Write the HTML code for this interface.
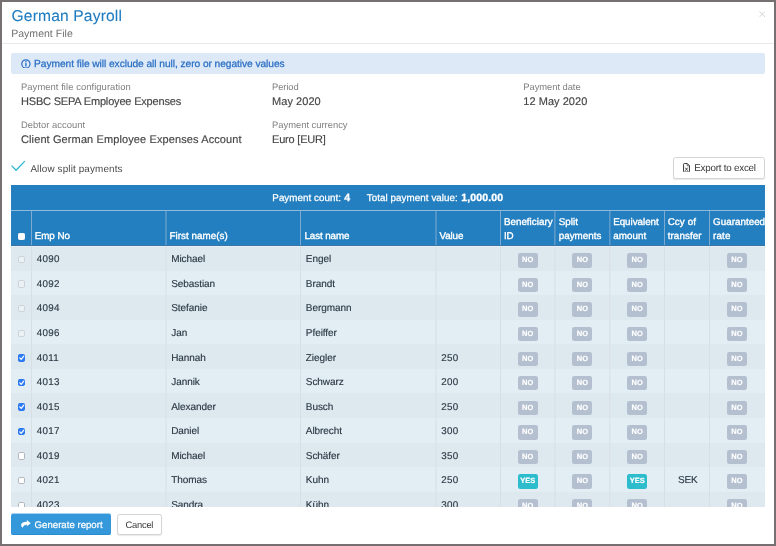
<!DOCTYPE html>
<html lang="en"><head><meta charset="utf-8"><title>German Payroll - Payment File</title>
<style>
*{box-sizing:border-box;margin:0;padding:0}
html,body{width:776px;height:546px;overflow:hidden;background:#fff}
body{font-family:"Liberation Sans",Arial,sans-serif;position:relative}
.t{position:absolute;white-space:nowrap;line-height:1;text-rendering:geometricPrecision;font-family:"Liberation Sans",Arial,sans-serif}
.abs{position:absolute}
#frame{left:0;top:0;width:776px;height:546px;border:2px solid #767070;z-index:10}
#hr{left:2px;top:43px;width:772px;height:1px;background:#e9e9e9}
#alert{left:11px;top:53.4px;width:754px;height:20.6px;background:#dde9f7;border-radius:2px}
#export{left:673px;top:156.6px;width:91.8px;height:22px;border:1px solid #d4d4d4;border-radius:2.5px;background:#fff;box-shadow:0 1px 1px rgba(0,0,0,.09)}
#clip{left:0;top:0;width:764.6px;height:506.6px;overflow:hidden}
#blue{left:11.4px;top:185px;width:753.2px;height:60.5px;background:#237fc0}
#hline{left:11.4px;top:209.6px;width:753.5px;height:1px;background:#8dbce0}
.hvl{position:absolute;top:210.6px;width:1px;height:34.9px;background:#7eaad0}
.row{position:absolute;left:11.4px;width:753.2px}
.vl{position:absolute;top:245.5px;width:1px;height:262px;background:#d7dfe4}
.bd{position:absolute;width:19.8px;height:14.3px;border-radius:2.3px;font-size:7.5px;font-weight:bold;color:#fff;text-align:center;line-height:14.3px;letter-spacing:0;-webkit-text-stroke:.15px #fff;text-rendering:geometricPrecision;font-family:"Liberation Sans",Arial,sans-serif}
.cb{position:absolute;width:7.6px;height:7.4px;border:1px solid #aaa;border-radius:1.8px;background:#fff}
.cb svg{position:absolute;left:-1px;top:-1px;width:7.4px;height:7.4px}
#gen{left:11px;top:513.6px;width:100px;height:21.4px;background:#3498db;border-radius:2px;border-bottom:1px solid #2a8bd0}
#cancel{left:117.4px;top:513.6px;width:44.3px;height:21.6px;background:#fff;border:1px solid #d4d4d4;border-radius:2.5px;box-shadow:0 1px 1px rgba(0,0,0,.09)}
#page{left:0;top:0;width:776px;height:546px;will-change:transform;background:#fff;overflow:hidden}
</style></head><body>
<div id="page" class="abs">
<div id="hr" class="abs"></div>
<div id="alert" class="abs"></div>
<svg class="abs" style="left:21.3px;top:58.7px" width="9.8" height="9.8" viewBox="0 0 10 10"><circle cx="5" cy="5" r="4.2" fill="none" stroke="#2a6fc4" stroke-width="1.25"/><rect x="4.3" y="4.2" width="1.4" height="3.4" fill="#2a6fc4"/><rect x="4.3" y="2.2" width="1.4" height="1.3" fill="#2a6fc4"/></svg>
<svg class="abs" style="left:10px;top:159px" width="16" height="14" viewBox="0 0 16 14"><path d="M1.6 6.6 L6.05 11.3 L14.8 2.1" fill="none" stroke="#2ab6cf" stroke-width="1.25"/></svg>
<div id="export" class="abs"><svg width="7" height="9.6" viewBox="0 0 7 9.6" style="position:absolute;left:9.3px;top:5.3px"><path d="M1.3 0.55 H4.3 L6.45 2.7 V8.3 Q6.45 9.05 5.7 9.05 H1.3 Q0.55 9.05 0.55 8.3 V1.3 Q0.55 0.55 1.3 0.55 Z" fill="none" stroke="#3a3a3a" stroke-width="1"/><path d="M4.2 0.6 V2.8 H6.4" fill="none" stroke="#3a3a3a" stroke-width=".7"/><path d="M2.3 4.7 L4.7 7.7 M4.7 4.7 L2.3 7.7" stroke="#3a3a3a" stroke-width=".95"/></svg></div>
<svg class="abs" style="left:758.8px;top:11px" width="6.4" height="6.4" viewBox="0 0 6 6"><path d="M0.3 0.3 L5.7 5.7 M5.7 0.3 L0.3 5.7" stroke="#cfcfcf" stroke-width=".8"/></svg>
<div id="clip" class="abs">
<div id="blue" class="abs"></div>
<div id="hline" class="abs"></div>
<div class="hvl" style="left:31px"></div>
<div class="hvl" style="left:165px;opacity:0.50"></div><div class="hvl" style="left:166px;opacity:0.50"></div>
<div class="hvl" style="left:300px"></div>
<div class="hvl" style="left:435px;opacity:0.50"></div><div class="hvl" style="left:436px;opacity:0.50"></div>
<div class="hvl" style="left:500px"></div>
<div class="hvl" style="left:554px;opacity:0.60"></div><div class="hvl" style="left:555px;opacity:0.40"></div>
<div class="hvl" style="left:609px;opacity:0.65"></div><div class="hvl" style="left:610px;opacity:0.35"></div>
<div class="hvl" style="left:664px"></div>
<div class="hvl" style="left:709px"></div>
<span class="cb" style="left:17.8px;top:232.6px;width:7.7px;height:7.3px;border-color:#f7f9fb;background:#fff;border-radius:1.3px"></span>
<div class="row" style="top:245.4px;height:3px;background:#dee8ef"></div>
<div class="row" style="top:246.00px;height:24.87px;background:#dee8ef"></div>
<div class="row" style="top:270.57px;height:24.87px;background:#e3edf4"></div>
<div class="row" style="top:295.14px;height:24.87px;background:#dee8ef"></div>
<div class="row" style="top:319.71px;height:24.87px;background:#e3edf4"></div>
<div class="row" style="top:344.28px;height:24.87px;background:#dee8ef"></div>
<div class="row" style="top:368.85px;height:24.87px;background:#e3edf4"></div>
<div class="row" style="top:393.42px;height:24.87px;background:#dee8ef"></div>
<div class="row" style="top:417.99px;height:24.87px;background:#e3edf4"></div>
<div class="row" style="top:442.56px;height:24.87px;background:#dee8ef"></div>
<div class="row" style="top:467.13px;height:24.87px;background:#e3edf4"></div>
<div class="row" style="top:491.70px;height:24.87px;background:#dee8ef"></div>
<div class="vl" style="left:31px"></div>
<div class="vl" style="left:165px;opacity:0.50"></div><div class="vl" style="left:166px;opacity:0.50"></div>
<div class="vl" style="left:300px"></div>
<div class="vl" style="left:435px;opacity:0.50"></div><div class="vl" style="left:436px;opacity:0.50"></div>
<div class="vl" style="left:500px"></div>
<div class="vl" style="left:554px;opacity:0.60"></div><div class="vl" style="left:555px;opacity:0.40"></div>
<div class="vl" style="left:609px;opacity:0.65"></div><div class="vl" style="left:610px;opacity:0.35"></div>
<div class="vl" style="left:664px"></div>
<div class="vl" style="left:709px"></div>
<span class="cb" style="left:17.7px;top:255.89px;border-color:#cdd4d9;background:#ecf1f5"></span>
<span class="bd" style="left:517.80px;top:253.24px;background:#b4c0d0">NO</span>
<span class="bd" style="left:572.48px;top:253.24px;background:#b4c0d0">NO</span>
<span class="bd" style="left:627.27px;top:253.24px;background:#b4c0d0">NO</span>
<span class="bd" style="left:727.10px;top:253.24px;background:#b4c0d0">NO</span>
<span class="cb" style="left:17.7px;top:280.46px;border-color:#cdd4d9;background:#ecf1f5"></span>
<span class="bd" style="left:517.80px;top:277.81px;background:#b4c0d0">NO</span>
<span class="bd" style="left:572.48px;top:277.81px;background:#b4c0d0">NO</span>
<span class="bd" style="left:627.27px;top:277.81px;background:#b4c0d0">NO</span>
<span class="bd" style="left:727.10px;top:277.81px;background:#b4c0d0">NO</span>
<span class="cb" style="left:17.7px;top:305.03px;border-color:#cdd4d9;background:#ecf1f5"></span>
<span class="bd" style="left:517.80px;top:302.38px;background:#b4c0d0">NO</span>
<span class="bd" style="left:572.48px;top:302.38px;background:#b4c0d0">NO</span>
<span class="bd" style="left:627.27px;top:302.38px;background:#b4c0d0">NO</span>
<span class="bd" style="left:727.10px;top:302.38px;background:#b4c0d0">NO</span>
<span class="cb" style="left:17.7px;top:329.60px;border-color:#cdd4d9;background:#ecf1f5"></span>
<span class="bd" style="left:517.80px;top:326.95px;background:#b4c0d0">NO</span>
<span class="bd" style="left:572.48px;top:326.95px;background:#b4c0d0">NO</span>
<span class="bd" style="left:627.27px;top:326.95px;background:#b4c0d0">NO</span>
<span class="bd" style="left:727.10px;top:326.95px;background:#b4c0d0">NO</span>
<span class="cb" style="left:17.7px;top:354.17px;border-color:#2b77ee;background:#2e7cf6"><svg viewBox="0 0 10 10"><path d="M2.4 5.3 L4.3 7.2 L7.8 2.9" fill="none" stroke="#fff" stroke-width="1.7" stroke-linecap="round" stroke-linejoin="round"/></svg></span>
<span class="bd" style="left:517.80px;top:351.52px;background:#b4c0d0">NO</span>
<span class="bd" style="left:572.48px;top:351.52px;background:#b4c0d0">NO</span>
<span class="bd" style="left:627.27px;top:351.52px;background:#b4c0d0">NO</span>
<span class="bd" style="left:727.10px;top:351.52px;background:#b4c0d0">NO</span>
<span class="cb" style="left:17.7px;top:378.74px;border-color:#2b77ee;background:#2e7cf6"><svg viewBox="0 0 10 10"><path d="M2.4 5.3 L4.3 7.2 L7.8 2.9" fill="none" stroke="#fff" stroke-width="1.7" stroke-linecap="round" stroke-linejoin="round"/></svg></span>
<span class="bd" style="left:517.80px;top:376.09px;background:#b4c0d0">NO</span>
<span class="bd" style="left:572.48px;top:376.09px;background:#b4c0d0">NO</span>
<span class="bd" style="left:627.27px;top:376.09px;background:#b4c0d0">NO</span>
<span class="bd" style="left:727.10px;top:376.09px;background:#b4c0d0">NO</span>
<span class="cb" style="left:17.7px;top:403.31px;border-color:#2b77ee;background:#2e7cf6"><svg viewBox="0 0 10 10"><path d="M2.4 5.3 L4.3 7.2 L7.8 2.9" fill="none" stroke="#fff" stroke-width="1.7" stroke-linecap="round" stroke-linejoin="round"/></svg></span>
<span class="bd" style="left:517.80px;top:400.66px;background:#b4c0d0">NO</span>
<span class="bd" style="left:572.48px;top:400.66px;background:#b4c0d0">NO</span>
<span class="bd" style="left:627.27px;top:400.66px;background:#b4c0d0">NO</span>
<span class="bd" style="left:727.10px;top:400.66px;background:#b4c0d0">NO</span>
<span class="cb" style="left:17.7px;top:427.88px;border-color:#2b77ee;background:#2e7cf6"><svg viewBox="0 0 10 10"><path d="M2.4 5.3 L4.3 7.2 L7.8 2.9" fill="none" stroke="#fff" stroke-width="1.7" stroke-linecap="round" stroke-linejoin="round"/></svg></span>
<span class="bd" style="left:517.80px;top:425.23px;background:#b4c0d0">NO</span>
<span class="bd" style="left:572.48px;top:425.23px;background:#b4c0d0">NO</span>
<span class="bd" style="left:627.27px;top:425.23px;background:#b4c0d0">NO</span>
<span class="bd" style="left:727.10px;top:425.23px;background:#b4c0d0">NO</span>
<span class="cb" style="left:17.7px;top:452.45px;border-color:#b4b7bb;background:#fff"></span>
<span class="bd" style="left:517.80px;top:449.80px;background:#b4c0d0">NO</span>
<span class="bd" style="left:572.48px;top:449.80px;background:#b4c0d0">NO</span>
<span class="bd" style="left:627.27px;top:449.80px;background:#b4c0d0">NO</span>
<span class="bd" style="left:727.10px;top:449.80px;background:#b4c0d0">NO</span>
<span class="cb" style="left:17.7px;top:477.01px;border-color:#b4b7bb;background:#fff"></span>
<span class="bd" style="left:517.80px;top:474.37px;background:#2cbccc">YES</span>
<span class="bd" style="left:572.48px;top:474.37px;background:#b4c0d0">NO</span>
<span class="bd" style="left:627.27px;top:474.37px;background:#2cbccc">YES</span>
<span class="bd" style="left:727.10px;top:474.37px;background:#b4c0d0">NO</span>
<span class="cb" style="left:17.7px;top:501.59px;border-color:#b4b7bb;background:#fff"></span>
<span class="bd" style="left:517.80px;top:498.94px;background:#b4c0d0">NO</span>
<span class="bd" style="left:572.48px;top:498.94px;background:#b4c0d0">NO</span>
<span class="bd" style="left:627.27px;top:498.94px;background:#b4c0d0">NO</span>
<span class="bd" style="left:727.10px;top:498.94px;background:#b4c0d0">NO</span>
<div class="abs" style="left:11.4px;top:244.9px;width:753.2px;height:1px;background:#3d76a6"></div>
<div class="abs" style="left:11.4px;top:245.9px;width:753.2px;height:1.2px;background:#e8eff4"></div>
</div>
<div class="abs" style="left:0;top:506.6px;width:776px;height:40px;background:#fff"></div>
<div class="abs" style="left:11px;top:513px;width:100px;height:2px;background:#3498db;opacity:.45;border-radius:2px 2px 0 0"></div><div id="gen" class="abs"><svg width="9.8" height="7.9" viewBox="0 0 10 8" style="position:absolute;left:10.2px;top:6.7px"><path d="M6 0 L10 3.2 L6 6.4 V4.7 C3.8 4.7 2.3 5.6 1.7 8 C0.6 7.2 0.1 6.2 0.1 5.2 C0.1 2.9 2.8 1.7 6 1.7 Z" fill="#fff"/></svg></div>
<div id="cancel" class="abs"></div>
<div id="txt" class="abs" style="left:0;top:0;width:764.6px;height:506.6px;overflow:hidden">
<span class="t" id="t0" style="left:11.50px;top:9.30px;font-size:15.6px;color:#1f7cc0;letter-spacing:0.162px;-webkit-text-stroke:.1px #1f7cc0;">German Payroll</span>
<span class="t" id="t1" style="left:11.20px;top:28.90px;font-size:10.5px;color:#707070;letter-spacing:0.027px;">Payment File</span>
<span class="t" id="t2" style="left:34.10px;top:60.20px;font-size:10.2px;color:#2a6fc4;letter-spacing:-0.054px;-webkit-text-stroke:.25px #2a6fc4;">Payment file will exclude all null, zero or negative values</span>
<span class="t" id="t3" style="left:21.00px;top:82.20px;font-size:9.4px;color:#808080;letter-spacing:0.074px;">Payment file configuration</span>
<span class="t" id="t4" style="left:21.00px;top:96.90px;font-size:11px;color:#454545;letter-spacing:-0.181px;-webkit-text-stroke:.15px #454545;">HSBC SEPA Employee Expenses</span>
<span class="t" id="t5" style="left:272.10px;top:82.20px;font-size:9.4px;color:#808080;letter-spacing:-0.102px;">Period</span>
<span class="t" id="t6" style="left:272.10px;top:96.90px;font-size:11px;color:#454545;letter-spacing:0.036px;-webkit-text-stroke:.15px #454545;">May 2020</span>
<span class="t" id="t7" style="left:523.30px;top:82.20px;font-size:9.4px;color:#808080;letter-spacing:-0.047px;">Payment date</span>
<span class="t" id="t8" style="left:523.30px;top:96.90px;font-size:11px;color:#454545;letter-spacing:0.036px;-webkit-text-stroke:.15px #454545;">12 May 2020</span>
<span class="t" id="t9" style="left:21.00px;top:120.40px;font-size:9.4px;color:#808080;letter-spacing:0.043px;">Debtor account</span>
<span class="t" id="t10" style="left:21.00px;top:135.30px;font-size:11px;color:#454545;letter-spacing:0.109px;-webkit-text-stroke:.15px #454545;">Client German Employee Expenses Account</span>
<span class="t" id="t11" style="left:272.10px;top:120.40px;font-size:9.4px;color:#808080;letter-spacing:-0.010px;">Payment currency</span>
<span class="t" id="t12" style="left:272.10px;top:135.30px;font-size:11px;color:#454545;letter-spacing:-0.214px;-webkit-text-stroke:.15px #454545;">Euro [EUR]</span>
<span class="t" id="t13" style="left:30.40px;top:164.60px;font-size:9.9px;color:#4a4a4a;letter-spacing:0.142px;">Allow split payments</span>
<span class="t" id="t14" style="left:694.20px;top:163.80px;font-size:9.8px;color:#3a3a3a;letter-spacing:-0.214px;">Export to excel</span>
<span class="t" id="t15" style="left:272.30px;top:193.70px;font-size:9.8px;color:#fff;letter-spacing:0.044px;-webkit-text-stroke:.25px #fff;">Payment count:</span>
<span class="t" id="t16" style="left:344.20px;top:192.70px;font-size:10.5px;color:#fff;letter-spacing:0.256px;font-weight:bold;-webkit-text-stroke:.3px #fff;">4</span>
<span class="t" id="t17" style="left:366.80px;top:193.70px;font-size:9.8px;color:#fff;letter-spacing:0.062px;-webkit-text-stroke:.25px #fff;">Total payment value:</span>
<span class="t" id="t18" style="left:461.30px;top:192.70px;font-size:10.5px;color:#fff;letter-spacing:0.116px;font-weight:bold;-webkit-text-stroke:.3px #fff;">1,000.00</span>
<span class="t" id="t19" style="left:34.80px;top:231.50px;font-size:9.8px;color:#fff;letter-spacing:-0.065px;-webkit-text-stroke:.35px #fff;">Emp No</span>
<span class="t" id="t20" style="left:169.50px;top:231.50px;font-size:9.8px;color:#fff;letter-spacing:0.038px;-webkit-text-stroke:.35px #fff;">First name(s)</span>
<span class="t" id="t21" style="left:304.50px;top:231.50px;font-size:9.8px;color:#fff;letter-spacing:-0.094px;-webkit-text-stroke:.35px #fff;">Last name</span>
<span class="t" id="t22" style="left:439.50px;top:231.50px;font-size:9.8px;color:#fff;letter-spacing:-0.109px;-webkit-text-stroke:.35px #fff;">Value</span>
<span class="t" id="t23" style="left:503.90px;top:217.50px;font-size:9.8px;color:#fff;letter-spacing:0.021px;-webkit-text-stroke:.35px #fff;">Beneficiary</span>
<span class="t" id="t24" style="left:503.90px;top:231.50px;font-size:9.8px;color:#fff;letter-spacing:-0.056px;-webkit-text-stroke:.35px #fff;">ID</span>
<span class="t" id="t25" style="left:558.80px;top:217.50px;font-size:9.8px;color:#fff;letter-spacing:0.007px;-webkit-text-stroke:.35px #fff;">Split</span>
<span class="t" id="t26" style="left:558.80px;top:231.50px;font-size:9.8px;color:#fff;letter-spacing:0.002px;-webkit-text-stroke:.35px #fff;">payments</span>
<span class="t" id="t27" style="left:613.20px;top:217.50px;font-size:9.8px;color:#fff;letter-spacing:-0.027px;-webkit-text-stroke:.35px #fff;">Equivalent</span>
<span class="t" id="t28" style="left:613.20px;top:231.50px;font-size:9.8px;color:#fff;letter-spacing:0.085px;-webkit-text-stroke:.35px #fff;">amount</span>
<span class="t" id="t29" style="left:667.70px;top:217.50px;font-size:9.8px;color:#fff;letter-spacing:0.106px;-webkit-text-stroke:.35px #fff;">Ccy of</span>
<span class="t" id="t30" style="left:667.70px;top:231.50px;font-size:9.8px;color:#fff;letter-spacing:0.098px;-webkit-text-stroke:.35px #fff;">transfer</span>
<span class="t" id="t31" style="left:713.10px;top:217.50px;font-size:9.8px;color:#fff;letter-spacing:0.025px;-webkit-text-stroke:.35px #fff;">Guaranteed</span>
<span class="t" id="t32" style="left:713.10px;top:231.50px;font-size:9.8px;color:#fff;letter-spacing:0.152px;-webkit-text-stroke:.35px #fff;">rate</span>
<span class="t" id="t35" style="left:36.80px;top:255.29px;font-size:9.8px;color:#2b3944;letter-spacing:0.250px;-webkit-text-stroke:.15px #2b3944;">4090</span>
<span class="t" id="t36" style="left:171.20px;top:255.29px;font-size:10px;color:#2b3944;letter-spacing:-0.060px;-webkit-text-stroke:.15px #2b3944;">Michael</span>
<span class="t" id="t37" style="left:305.80px;top:255.29px;font-size:10px;color:#2b3944;letter-spacing:-0.060px;-webkit-text-stroke:.15px #2b3944;">Engel</span>
<span class="t" id="t38" style="left:36.80px;top:279.86px;font-size:9.8px;color:#2b3944;letter-spacing:0.250px;-webkit-text-stroke:.15px #2b3944;">4092</span>
<span class="t" id="t39" style="left:171.20px;top:279.86px;font-size:10px;color:#2b3944;letter-spacing:-0.060px;-webkit-text-stroke:.15px #2b3944;">Sebastian</span>
<span class="t" id="t40" style="left:305.80px;top:279.86px;font-size:10px;color:#2b3944;letter-spacing:-0.060px;-webkit-text-stroke:.15px #2b3944;">Brandt</span>
<span class="t" id="t41" style="left:36.80px;top:304.43px;font-size:9.8px;color:#2b3944;letter-spacing:0.250px;-webkit-text-stroke:.15px #2b3944;">4094</span>
<span class="t" id="t42" style="left:171.20px;top:304.43px;font-size:10px;color:#2b3944;letter-spacing:-0.060px;-webkit-text-stroke:.15px #2b3944;">Stefanie</span>
<span class="t" id="t43" style="left:305.80px;top:304.43px;font-size:10px;color:#2b3944;letter-spacing:-0.060px;-webkit-text-stroke:.15px #2b3944;">Bergmann</span>
<span class="t" id="t44" style="left:36.80px;top:329.00px;font-size:9.8px;color:#2b3944;letter-spacing:0.250px;-webkit-text-stroke:.15px #2b3944;">4096</span>
<span class="t" id="t45" style="left:171.20px;top:329.00px;font-size:10px;color:#2b3944;letter-spacing:-0.060px;-webkit-text-stroke:.15px #2b3944;">Jan</span>
<span class="t" id="t46" style="left:305.80px;top:329.00px;font-size:10px;color:#2b3944;letter-spacing:-0.060px;-webkit-text-stroke:.15px #2b3944;">Pfeiffer</span>
<span class="t" id="t47" style="left:36.80px;top:353.56px;font-size:9.8px;color:#2b3944;letter-spacing:0.250px;-webkit-text-stroke:.15px #2b3944;">4011</span>
<span class="t" id="t48" style="left:171.20px;top:353.56px;font-size:10px;color:#2b3944;letter-spacing:-0.060px;-webkit-text-stroke:.15px #2b3944;">Hannah</span>
<span class="t" id="t49" style="left:305.80px;top:353.56px;font-size:10px;color:#2b3944;letter-spacing:-0.060px;-webkit-text-stroke:.15px #2b3944;">Ziegler</span>
<span class="t" id="t50" style="left:441.20px;top:353.56px;font-size:9.8px;color:#2b3944;letter-spacing:0.300px;-webkit-text-stroke:.15px #2b3944;">250</span>
<span class="t" id="t51" style="left:36.80px;top:378.13px;font-size:9.8px;color:#2b3944;letter-spacing:0.250px;-webkit-text-stroke:.15px #2b3944;">4013</span>
<span class="t" id="t52" style="left:171.20px;top:378.13px;font-size:10px;color:#2b3944;letter-spacing:-0.060px;-webkit-text-stroke:.15px #2b3944;">Jannik</span>
<span class="t" id="t53" style="left:305.80px;top:378.13px;font-size:10px;color:#2b3944;letter-spacing:-0.060px;-webkit-text-stroke:.15px #2b3944;">Schwarz</span>
<span class="t" id="t54" style="left:441.20px;top:378.13px;font-size:9.8px;color:#2b3944;letter-spacing:0.300px;-webkit-text-stroke:.15px #2b3944;">200</span>
<span class="t" id="t55" style="left:36.80px;top:402.71px;font-size:9.8px;color:#2b3944;letter-spacing:0.250px;-webkit-text-stroke:.15px #2b3944;">4015</span>
<span class="t" id="t56" style="left:171.20px;top:402.71px;font-size:10px;color:#2b3944;letter-spacing:-0.060px;-webkit-text-stroke:.15px #2b3944;">Alexander</span>
<span class="t" id="t57" style="left:305.80px;top:402.71px;font-size:10px;color:#2b3944;letter-spacing:-0.060px;-webkit-text-stroke:.15px #2b3944;">Busch</span>
<span class="t" id="t58" style="left:441.20px;top:402.71px;font-size:9.8px;color:#2b3944;letter-spacing:0.300px;-webkit-text-stroke:.15px #2b3944;">250</span>
<span class="t" id="t59" style="left:36.80px;top:427.27px;font-size:9.8px;color:#2b3944;letter-spacing:0.250px;-webkit-text-stroke:.15px #2b3944;">4017</span>
<span class="t" id="t60" style="left:171.20px;top:427.27px;font-size:10px;color:#2b3944;letter-spacing:-0.060px;-webkit-text-stroke:.15px #2b3944;">Daniel</span>
<span class="t" id="t61" style="left:305.80px;top:427.27px;font-size:10px;color:#2b3944;letter-spacing:-0.060px;-webkit-text-stroke:.15px #2b3944;">Albrecht</span>
<span class="t" id="t62" style="left:441.20px;top:427.27px;font-size:9.8px;color:#2b3944;letter-spacing:0.300px;-webkit-text-stroke:.15px #2b3944;">300</span>
<span class="t" id="t63" style="left:36.80px;top:451.85px;font-size:9.8px;color:#2b3944;letter-spacing:0.250px;-webkit-text-stroke:.15px #2b3944;">4019</span>
<span class="t" id="t64" style="left:171.20px;top:451.85px;font-size:10px;color:#2b3944;letter-spacing:-0.060px;-webkit-text-stroke:.15px #2b3944;">Michael</span>
<span class="t" id="t65" style="left:305.80px;top:451.85px;font-size:10px;color:#2b3944;letter-spacing:-0.060px;-webkit-text-stroke:.15px #2b3944;">Schäfer</span>
<span class="t" id="t66" style="left:441.20px;top:451.85px;font-size:9.8px;color:#2b3944;letter-spacing:0.300px;-webkit-text-stroke:.15px #2b3944;">350</span>
<span class="t" id="t67" style="left:36.80px;top:476.41px;font-size:9.8px;color:#2b3944;letter-spacing:0.250px;-webkit-text-stroke:.15px #2b3944;">4021</span>
<span class="t" id="t68" style="left:171.20px;top:476.41px;font-size:10px;color:#2b3944;letter-spacing:-0.060px;-webkit-text-stroke:.15px #2b3944;">Thomas</span>
<span class="t" id="t69" style="left:305.80px;top:476.41px;font-size:10px;color:#2b3944;letter-spacing:-0.060px;-webkit-text-stroke:.15px #2b3944;">Kuhn</span>
<span class="t" id="t70" style="left:441.20px;top:476.41px;font-size:9.8px;color:#2b3944;letter-spacing:0.300px;-webkit-text-stroke:.15px #2b3944;">250</span>
<span class="t" id="t71" style="left:677.90px;top:476.41px;font-size:10px;color:#2b3944;letter-spacing:-0.100px;-webkit-text-stroke:.15px #2b3944;">SEK</span>
<span class="t" id="t72" style="left:36.80px;top:500.99px;font-size:9.8px;color:#2b3944;letter-spacing:0.250px;-webkit-text-stroke:.15px #2b3944;">4023</span>
<span class="t" id="t73" style="left:171.20px;top:500.99px;font-size:10px;color:#2b3944;letter-spacing:-0.060px;-webkit-text-stroke:.15px #2b3944;">Sandra</span>
<span class="t" id="t74" style="left:305.80px;top:500.99px;font-size:10px;color:#2b3944;letter-spacing:-0.060px;-webkit-text-stroke:.15px #2b3944;">Kühn</span>
<span class="t" id="t75" style="left:441.20px;top:500.99px;font-size:9.8px;color:#2b3944;letter-spacing:0.300px;-webkit-text-stroke:.15px #2b3944;">300</span>
</div>
<span class="t" id="t33" style="left:34.60px;top:521.00px;font-size:9.6px;color:#fff;letter-spacing:0.018px;-webkit-text-stroke:.2px #fff;">Generate report</span>
<span class="t" id="t34" style="left:125.50px;top:520.00px;font-size:9.4px;color:#3a3a3a;letter-spacing:-0.248px;">Cancel</span>
<div id="frame" class="abs"></div>
</div>
</body></html>
